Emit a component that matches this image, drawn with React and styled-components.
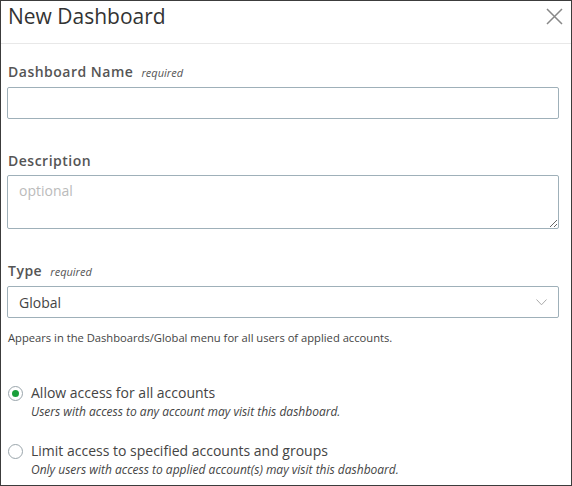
import React, { useState } from 'react'
import styled, { createGlobalStyle } from 'styled-components'

const GlobalStyle = createGlobalStyle`
	html, body {
		margin: 0;
		padding: 0;
		background: #fff;
	}
	* {
		box-sizing: border-box;
	}
`

const Modal = () => {
	const [access, setAccess] = useState('all')

	return (
		<Dialog>
			<GlobalStyle />
			<Header>
				<Title>New Dashboard</Title>
				<Close aria-label="close">
					<svg width="17" height="17" viewBox="0 0 17 17">
						<path d="M1 1 L16 16 M16 1 L1 16" stroke="#888" strokeWidth="1.5" fill="none" />
					</svg>
				</Close>
			</Header>
			<Body>
				<Field>
					<Label>Dashboard Name <Req>required</Req></Label>
					<TextInput type="text" />
				</Field>
				<Field>
					<Label>Description</Label>
					<TextArea placeholder="optional" />
				</Field>
				<Field>
					<Label>Type <Req>required</Req></Label>
					<SelectBox>
						<span>Global</span>
						<svg width="11" height="7" viewBox="0 0 11 7">
							<path d="M0.5 0.5 L5.5 5.8 L10.5 0.5" stroke="#aaa" strokeWidth="1" fill="none" />
						</svg>
					</SelectBox>
					<Help>Appears in the Dashboards/Global menu for all users of applied accounts.</Help>
				</Field>
				<Options>
					<Option onClick={() => setAccess('all')}>
						<Radio checked={access === 'all'} />
						<OptionText>
							<OptionLabel>Allow access for all accounts</OptionLabel>
							<OptionNote>Users with access to any account may visit this dashboard.</OptionNote>
						</OptionText>
					</Option>
					<Option onClick={() => setAccess('limit')}>
						<Radio checked={access === 'limit'} />
						<OptionText>
							<OptionLabel>Limit access to specified accounts and groups</OptionLabel>
							<OptionNote>Only users with access to applied account(s) may visit this dashboard.</OptionNote>
						</OptionText>
					</Option>
				</Options>
			</Body>
		</Dialog>
	)
}

const Dialog = styled.div`
	width: 572px;
	height: 486px;
	border: 1px solid #3c3c3c;
	background: #fff;
	font-family: "Open Sans", "Noto Sans", sans-serif;
	overflow: hidden;
`
const Header = styled.div`
	height: 43px;
	border-bottom: 1px solid #e8e8e8;
	display: flex;
	align-items: center;
	justify-content: space-between;
	padding: 0 8px 0 7px;
`
const Title = styled.h2`
	margin: 0;
	font-size: 21px;
	font-weight: 400;
	color: #333;
	line-height: 1;
	margin-top: -12px;
`
const Close = styled.button`
	border: 0;
	background: none;
	padding: 0;
	display: flex;
	margin-top: -12px;
	cursor: pointer;
`
const Body = styled.div`
	padding: 18px 12px 0 6px;
`
const Field = styled.div`
	margin-bottom: 32px;
`
const Label = styled.div`
	font-size: 14px;
	font-weight: 600;
	color: #555;
	letter-spacing: 0.5px;
	padding-left: 1px;
	margin-bottom: 5px;
	line-height: 19px;
`
const Req = styled.span`
	font-size: 11px;
	font-weight: 400;
	font-style: italic;
	letter-spacing: 0;
	margin-left: 4px;
`
const TextInput = styled.input`
	display: block;
	width: 100%;
	height: 32px;
	border: 1px solid #9fb0b9;
	border-radius: 2px;
	font-family: inherit;
	font-size: 14px;
	padding: 0 11px;
	outline: none;
`
const TextArea = styled.textarea`
	display: block;
	width: 100%;
	height: 54px;
	border: 1px solid #9fb0b9;
	border-radius: 2px;
	font-family: inherit;
	font-size: 14px;
	padding: 5px 11px;
	outline: none;
	resize: vertical;
	&::placeholder {
		color: #bbb;
	}
`
const SelectBox = styled.div`
	height: 32px;
	border: 1px solid #9fb0b9;
	border-radius: 2px;
	display: flex;
	align-items: center;
	justify-content: space-between;
	padding: 0 11px 0 11px;
	font-size: 14px;
	color: #444;
`
const Help = styled.div`
	font-size: 11.2px;
	color: #444;
	margin-top: 12px;
	padding-left: 1px;
`
const Options = styled.div`
	display: flex;
	flex-direction: column;
	gap: 20px;
	margin-top: 38px;
`
const Option = styled.label`
	display: flex;
	gap: 8px;
	cursor: pointer;
	padding-left: 1px;
`
const Radio = styled.span`
	width: 15px;
	height: 15px;
	margin-top: 3px;
	border-radius: 50%;
	border: 1px solid #9aa5ab;
	flex-shrink: 0;
	display: flex;
	align-items: center;
	justify-content: center;
	&::after {
		content: '';
		width: 7px;
		height: 7px;
		border-radius: 50%;
		background: ${props => props.checked ? '#1a9f3a' : 'transparent'};
	}
`
const OptionText = styled.div`
	display: flex;
	flex-direction: column;
`
const OptionLabel = styled.span`
	font-size: 14px;
	color: #444;
	line-height: 20px;
`
const OptionNote = styled.span`
	font-size: 12px;
	font-style: italic;
	color: #444;
	line-height: 18px;
`

export default Modal
